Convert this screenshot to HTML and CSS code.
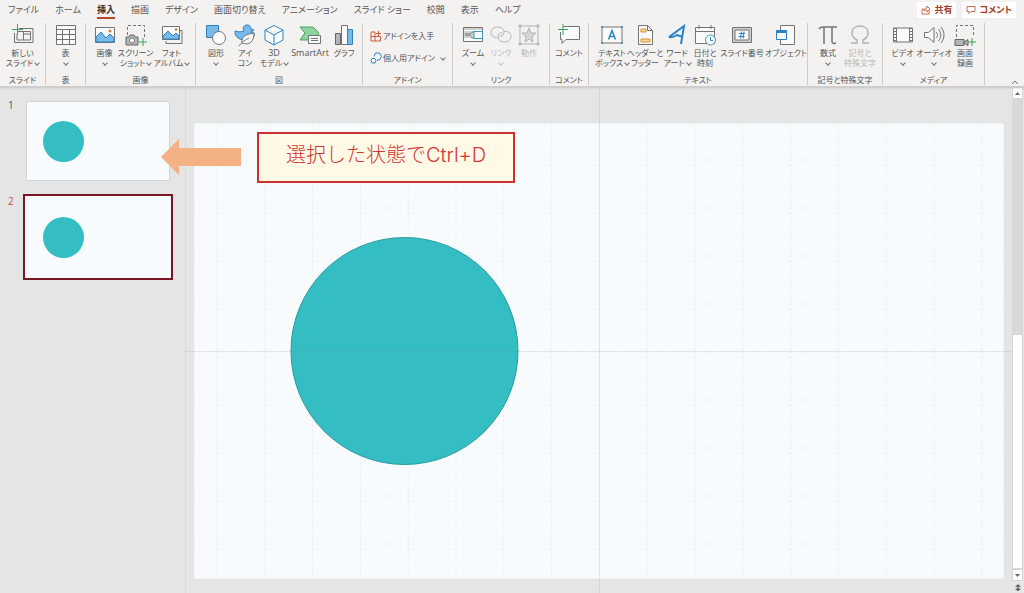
FILE: index.html
```html
<!DOCTYPE html>
<html lang="ja">
<head>
<meta charset="utf-8">
<meta name="viewport" content="width=device-width, initial-scale=1">
<title>プレゼンテーション</title>
<link rel="stylesheet" href="styles.css">
</head>
<body>
<div class="app">
<header class="topbar">
  <nav class="tabs">
    <a class="tab" href="#">ファイル</a>
    <a class="tab" href="#">ホーム</a>
    <a class="tab tab-active" href="#">挿入</a>
    <a class="tab" href="#">描画</a>
    <a class="tab" href="#">デザイン</a>
    <a class="tab" href="#">画面切り替え</a>
    <a class="tab" href="#">アニメーション</a>
    <a class="tab" href="#">スライド ショー</a>
    <a class="tab" href="#">校閲</a>
    <a class="tab" href="#">表示</a>
    <a class="tab" href="#">ヘルプ</a>
  </nav>
  <div class="actions">
    <button class="action"><svg width="10" height="10" viewBox="0 0 10 10"><path d="M3 4H1v5h7V6M3 6c0-2 1-3 3-3V1l3 3-3 3V5C5 5 4 5 3 6z"/></svg>共有</button>
    <button class="action"><svg width="10" height="10" viewBox="0 0 10 10"><path d="M1 1.500h8v5H5l-2 2v-2H1z"/></svg>コメント</button>
  </div>
</header>

<section class="ribbon">
  <div class="group g-slide">
    <div class="tools">
      <button class="tool"><svg class="icon" viewBox="0 0 22 22"><path class="k" d="M7 4.500h14v14H2.500V9M6 7.500h12.500v8.500H5V10M11.500 7.500v8.500M11.500 10H18"/><path class="gr" d="M5.500 0v11M0 5.500h11"/></svg><span>新しい</span><span class="drop">スライド</span></button>
    </div>
    <div class="caption">スライド</div>
  </div>
  <div class="group g-table">
    <div class="tools">
      <button class="tool"><svg class="icon" viewBox="0 0 22 22"><path class="k w" d="M1.500 1.500h19v19h-19z"/><path class="k" d="M1.500 5.500h19M1.500 10.500h19M1.500 15.500h19M7.500 5v15M14.500 5v15"/></svg><span>表</span><span class="drop"></span></button>
    </div>
    <div class="caption">表</div>
  </div>
  <div class="group g-image">
    <div class="tools">
      <button class="tool"><svg class="icon" viewBox="0 0 22 22"><path class="k w" d="M1.500 3.500h19v15h-19z"/><path class="bf" d="M2 13l5-5 5 6 4-4 4 4v4H2z"/><circle class="of" cx="16" cy="7" r="1.500"/></svg><span>画像</span><span class="drop"></span></button>
      <button class="tool"><svg class="icon" viewBox="0 0 22 22"><path class="k dash" d="M2.500 11V1.500h17V13"/><path class="kf" d="M1 13h3l1-2h4l1 2h3v8H1z"/><circle class="k w" cx="7" cy="16.500" r="2.500"/><path class="gr" d="M18 14v8M14 18h8"/></svg><span>スクリーン</span><span class="drop">ショット</span></button>
      <button class="tool"><svg class="icon" viewBox="0 0 22 22"><path class="k" d="M18 6.500h3v13H5V17"/><path class="k w" d="M1.500 2.500h17v13h-17z"/><path class="bf" d="M2 12l5-5 5 5 3-3 3 3v3H2z"/><circle class="of" cx="15" cy="5.500" r="1.300"/></svg><span>フォト</span><span class="drop">アルバム</span></button>
    </div>
    <div class="caption">画像</div>
  </div>
  <div class="group g-figure">
    <div class="tools">
      <button class="tool"><svg class="icon" viewBox="0 0 22 22"><path class="bf" d="M1.500 1.500h12v12h-12z"/><circle class="k w" cx="14" cy="14" r="6.500"/></svg><span>図形</span><span class="drop"></span></button>
      <button class="tool"><svg class="icon" viewBox="0 0 22 22"><path class="bf" d="M1 7c3 1 6 1 9 0-2-3 0-6 3-6s4 2 4 4l3 1-3 2c3 0 4 2 3 4-2 5-12 6-17 1-2-2-2-4-2-6z"/><path class="k w" d="M8 19c-1-7 5-9 12-10 0 8-4 13-12 10zM5 22c3-4 6-6 10-8"/></svg><span>アイ</span><span>コン</span></button>
      <button class="tool"><svg class="icon" viewBox="0 0 22 22"><path class="b w" d="M11 1.500l9 4.500v10l-9 5-9-5V6zM2 6l9 5 9-5M11 11v10"/></svg><span class="latin">3D</span><span class="drop">モデル</span></button>
      <button class="tool"><svg class="icon" viewBox="0 0 22 22"><path class="gf" d="M1 3h13l6 6-5 7H1l5-7z"/><path class="k w" d="M9.500 11.500h12v8h-12z"/><path class="k" d="M12 14.500h7M12 16.500h7"/></svg><span class="latin">SmartArt</span></button>
      <button class="tool"><svg class="icon" viewBox="0 0 22 22"><path class="kf" d="M2.500 9.500h5v11h-5z"/><path class="k w" d="M8.500 1.500h6v19h-6z"/><path class="bf" d="M14.500 5.500h5v15h-5z"/></svg><span>グラフ</span></button>
    </div>
    <div class="caption">図</div>
  </div>
  <div class="group g-addin">
    <div class="addins">
      <button class="addin"><svg width="12" height="12" viewBox="0 0 12 12"><path class="o" d="M1 2h4v9H1zM1 6.500h9.500V11H5M8.500 1v5M6 3.500h5"/></svg>アドインを入手</button>
      <button class="addin"><svg width="12" height="12" viewBox="0 0 12 12"><path class="b" d="M4 4.500L5.500 1h4l2 3.500-2 3.500H7M2 6.500h3L6 8.500 5 11H2L1 8.500z"/></svg><span class="drop">個人用アドイン</span></button>
    </div>
    <div class="caption">アドイン</div>
  </div>
  <div class="group g-link">
    <div class="tools">
      <button class="tool"><svg class="icon" viewBox="0 0 22 22"><path class="k w" d="M1.500 3.500h19v14h-19z"/><path class="lf" d="M2 7h10v7H2zM2 4h18v2H2z"/><path class="k" d="M4 9v3M6 9v3M8 9v3"/><path class="t w" d="M12 7.500h8.500v7H12zM9 9l3-1.500M9 13l3 1.500"/></svg><span>ズーム</span><span class="drop"></span></button>
      <button class="tool" disabled><svg class="icon" viewBox="0 0 22 22"><path class="d" d="M8 13.500C4 14 1 12 1 8.500S4 3 7.500 3 14 5 14 8s-2 4-4 4.500M14 7.500c4-.5 7 1.500 7 5s-3 5.500-6.500 5.500S8 16 8 13s2-4 4-4.500"/></svg><span>リンク</span><span class="drop"></span></button>
      <button class="tool" disabled><svg class="icon" viewBox="0 0 22 22"><path class="d" d="M2 2h18v18H2z"/><path class="d df" d="M11 4l2 5h5l-4 4 1 5-4-3-4 3 1-5-4-4h5z"/><path class="d" d="M1 1h2v2H1zM19 1h2v2h-2zM1 19h2v2H1zM19 19h2v2h-2z"/></svg><span>動作</span></button>
    </div>
    <div class="caption">リンク</div>
  </div>
  <div class="group g-comment">
    <div class="tools">
      <button class="tool"><svg class="icon" viewBox="0 0 22 22"><path class="k w" d="M5 2.500h16.500v13H8l-4 4v-4H2.500V8"/><path class="gr" d="M5 0v11M0 5.500h10"/></svg><span>コメント</span></button>
    </div>
    <div class="caption">コメント</div>
  </div>
  <div class="group g-text">
    <div class="tools">
      <button class="tool"><svg class="icon" viewBox="0 0 22 22"><path class="k w" d="M1 3h20v16H1z"/><path class="b thick" d="M7.500 15.500L11 6.500l3.500 9M8.800 12.500h4.400"/><path class="b thick" d="M0 3h2M20 3h2M0 19h2M20 19h2"/></svg><span>テキスト</span><span class="drop">ボックス</span></button>
      <button class="tool"><svg class="icon" viewBox="0 0 22 22"><path class="k w" d="M4.500 1.500h9l5 5v14h-14zM13.500 1.500v5h5"/><path class="o y" d="M7 5h5v3H7zM7 15h9v3H7z"/></svg><span>ヘッダーと</span><span>フッター</span></button>
      <button class="tool"><svg class="icon" viewBox="0 0 22 22"><path class="b heavy" d="M3 13L18 2l-3 18M3 13c3 1 5 0 8-2l6 2"/></svg><span>ワード</span><span class="drop">アート</span></button>
      <button class="tool"><svg class="icon" viewBox="0 0 22 22"><path class="k w" d="M1.500 3.500h19v16h-19zM1.500 7.500h19M5 1v4M17 1v4"/><circle class="t w" cx="16.500" cy="16" r="5"/><path class="b" d="M16.500 13v3.500H19"/></svg><span>日付と</span><span>時刻</span></button>
      <button class="tool"><svg class="icon" viewBox="0 0 22 22"><path class="k lf" d="M1.500 3.500h19v15h-19z"/><path class="k w" d="M4 6h14v10H4z"/><path class="b" d="M10.500 7.500l-1 7M13 7.500l-1 7M8 9.500h6M7.500 12.500h6"/></svg><span>スライド番号</span></button>
      <button class="tool"><svg class="icon" viewBox="0 0 22 22"><path class="k w" d="M5.500 1.500h14v19h-14z"/><path class="b w" d="M1.500 6.500h10v9h-10z"/><path class="b heavy" d="M1.500 8h10"/></svg><span>オブジェクト</span></button>
    </div>
    <div class="caption">テキスト</div>
  </div>
  <div class="group g-symbol">
    <div class="tools">
      <button class="tool"><svg class="icon" viewBox="0 0 22 22"><path class="k thick" d="M2 5c1-2 2-2 4-2h14M7 3v17M15 3v14c0 2 1 3 4 2"/></svg><span>数式</span><span class="drop"></span></button>
      <button class="tool" disabled><svg class="icon" viewBox="0 0 22 22"><path class="d thick" d="M2 19h6v-3c-4-2-5-5-5-7 0-4 3-7 8-7s8 3 8 7c0 3-1 5-5 7v3h6"/></svg><span>記号と</span><span>特殊文字</span></button>
    </div>
    <div class="caption">記号と特殊文字</div>
  </div>
  <div class="group g-media">
    <div class="tools">
      <button class="tool"><svg class="icon" viewBox="0 0 22 22"><path class="k w" d="M1.500 4h19v14h-19zM4.500 4v14M17.500 4v14"/><path class="k film" d="M3 4v14M19 4v14"/></svg><span>ビデオ</span><span class="drop"></span></button>
      <button class="tool"><svg class="icon" viewBox="0 0 22 22"><path class="k w" d="M1.500 8.500h4L11 3.500v15l-5.500-5h-4z"/><path class="k" d="M13 8c2 2 2 4 0 6M15.500 5c3 4 3 8 0 12M18 3c4 5 4 11 0 16"/></svg><span>オーディオ</span><span class="drop"></span></button>
      <button class="tool"><svg class="icon" viewBox="0 0 22 22"><path class="k dash" d="M2.500 13V1.500h17V13"/><path class="kf" d="M1 15.500h9v6H1zM10 18l4-2.500v6L10 19z"/><path class="gr" d="M18 14v8M14 18h8"/></svg><span>画面</span><span>録画</span></button>
    </div>
    <div class="caption">メディア</div>
  </div>
  <button class="collapse" aria-label="リボンを折りたたむ"><svg width="8" height="6" viewBox="0 0 8 6"><path class="k" d="M1 5l3-3 3 3"/></svg></button>
</section>

<main class="workspace">
  <aside class="slides">
    <div class="slide-row">
      <span class="number">1</span>
      <button class="thumb" aria-label="スライド 1"><span class="dot"></span></button>
    </div>
    <div class="slide-row slide-current">
      <span class="number">2</span>
      <button class="thumb" aria-label="スライド 2"><span class="dot"></span></button>
    </div>
  </aside>
  <section class="stage">
    <svg class="canvas" viewBox="0 0 810 456">
      <defs>
        <pattern id="grid" x="22.500" y="36.500" width="47.800" height="48" patternUnits="userSpaceOnUse">
          <path class="gridline" d="M0 .5h47.800M.5 0v48"/>
        </pattern>
      </defs>
      <rect class="paper" width="810" height="456"/>
      <rect width="810" height="456" fill="url(#grid)"/>
      <circle class="disc" cx="210.500" cy="228" r="113.500"/>
      <path class="guide" d="M-9 228.500H818M405.500 -36V470"/>
    </svg>
    <div class="callout">選択した状態でCtrl+D</div>
    <svg class="arrow" width="80" height="37" viewBox="0 0 80 37"><path d="M0 18L18 0v9h62v18H18v9z"/></svg>
  </section>
  <div class="scrollbar">
    <button class="step" aria-label="上へ"><svg width="5" height="3" viewBox="0 0 5 3"><path d="M0 3L2.500 0 5 3z"/></svg></button>
    <div class="track"><div class="knob"></div></div>
    <button class="step" aria-label="下へ"><svg width="5" height="3" viewBox="0 0 5 3"><path d="M0 0h5L2.500 3z"/></svg></button>
    <button class="step step-plain" aria-label="前のスライド"><svg width="6" height="7" viewBox="0 0 6 7"><path d="M0 3l3-3 3 3zM0 6l3-3 3 3zM2 5h2v2H2z"/></svg></button>
  </div>
</main>
</div>
</body>
</html>
```
FILE: styles.css
```css
* { box-sizing: border-box; }

body {
  margin: 0;
  background: #e5e5e5;
  color: #555;
  font: 8px/10px "Open Sans", "Noto Sans CJK JP", sans-serif;
  font-feature-settings: "palt";
}

button {
  padding: 0;
  border: 0;
  background: none;
  color: inherit;
  font: inherit;
  font-feature-settings: inherit;
}

.app {
  display: flex;
  flex-direction: column;
  height: 100vh;
}

.topbar {
  display: flex;
  justify-content: space-between;
  height: 20px;
  background: #f3f2f1;
}

.tabs {
  display: flex;
  gap: 16px;
  padding-left: 8px;
  font-size: 9px;
  line-height: 14px;
}

.tab {
  height: 19px;
  padding-top: 3px;
  color: inherit;
  text-decoration: none;
  white-space: nowrap;
}

.tab-active {
  border-bottom: 2px solid #b7472a;
  color: #333;
  font-weight: 700;
}

.actions {
  display: flex;
  gap: 6px;
  padding: 2px 8px 2px 0;
}

.action {
  display: flex;
  align-items: center;
  gap: 3px;
  padding: 0 4px;
  border-radius: 1px;
  background: #fff;
  color: #a33c25;
  font-size: 9px;
  font-weight: 700;
}

.action svg {
  fill: none;
  stroke: #b7472a;
  stroke-width: 0.8;
}

.ribbon {
  display: flex;
  flex: none;
  height: 67px;
  padding-top: 3px;
  border-bottom: 1px solid #d0cecc;
  background: #f3f2f1;
  box-shadow: 0 1px 2px #c4c4c4;
  z-index: 1;
}

.group {
  display: flex;
  flex: none;
  flex-direction: column;
  justify-content: space-between;
  height: 62px;
  border-right: 1px solid #cfcdcb;
}

.tools {
  display: grid;
  justify-content: center;
}

.g-slide { width: 46px; }
.g-slide .tools, .g-table .tools, .g-comment .tools { grid-template-columns: 36px; }
.g-table { width: 40px; }
.g-image { width: 110px; }
.g-image .tools { grid-template-columns: 28px 34px 38px; }
.g-figure { width: 167px; }
.g-figure .tools { grid-template-columns: 30px 28px 30px 42px 26px; }
.g-addin { width: 90px; }
.g-link { width: 97px; }
.g-link .tools { grid-template-columns: 30px 26px 30px; }
.g-comment { width: 39px; }
.g-text { width: 219px; }
.g-text .tools {
  grid-template-columns: 30px 36px 28px 28px 46px 42px;
  justify-content: end;
}
.g-symbol { width: 75px; }
.g-symbol .tools { grid-template-columns: 30px 34px; }
.g-media { width: 102px; }
.g-media .tools { grid-template-columns: 29px 34px 28px; }

.tool {
  display: flex;
  flex-direction: column;
  align-items: center;
  white-space: nowrap;
}

.tool:disabled { color: #b8b8b8; }

.latin { font-size: 9px; }

.icon {
  width: 22px;
  height: 22px;
  margin: 1px 0 2px;
}

.drop {
  display: flex;
  align-items: center;
  gap: 2px;
  min-height: 10px;
}

.drop::after {
  content: "";
  width: 3px;
  height: 3px;
  border: solid currentColor;
  border-width: 0 1px 1px 0;
  opacity: 0.8;
  transform: rotate(45deg);
}

.caption {
  text-align: center;
  white-space: nowrap;
}

.addins {
  display: flex;
  flex-direction: column;
  gap: 10px;
  padding: 7px 0 0 7px;
}

.addin {
  display: flex;
  align-items: center;
  gap: 1px;
  height: 12px;
  white-space: nowrap;
}

.addin .drop { gap: 6px; }

.collapse {
  display: flex;
  align-items: flex-end;
  margin-left: auto;
  padding: 0 5px 1px;
}

svg .k, svg .b, svg .t, svg .gr, svg .o, svg .d { fill: none; stroke: #737373; }
svg .b { stroke: #2b83c6; }
svg .t { stroke: #3d9ab5; }
svg .gr { stroke: #36a65a; }
svg .o { stroke: #cf5b38; }
svg .y { fill: #f8d59a; stroke: #d9932f; }
svg .d { stroke: #b3b3b3; }
svg .df { fill: #d5d5d5; }
svg .w { fill: #fafafa; }
svg .bf { fill: #78b9eb; stroke: #3280bb; }
svg .gf { fill: #8fd3a0; stroke: #45a564; }
svg .kf { fill: #b5b5b5; stroke: #666; }
svg .lf { fill: #d0d0d0; }
svg .of { fill: #dc7a3c; }
svg .dash { stroke-dasharray: 3 2; }
svg .film { stroke-width: 2; stroke-dasharray: 1 2; }
svg .thick { stroke-width: 1.5; }
svg .heavy { stroke-width: 2; }

.workspace {
  display: flex;
  flex: 1;
  min-height: 0;
}

.slides {
  display: flex;
  flex: none;
  flex-direction: column;
  gap: 10px;
  width: 186px;
  padding: 11px 12px 0 8px;
  border-right: 1px solid #d8d8d8;
}

.slide-row {
  display: grid;
  grid-template-columns: 15px 1fr;
}

.number {
  padding-top: 1px;
  font-size: 10px;
  line-height: 12px;
}

.thumb {
  display: flex;
  align-items: center;
  aspect-ratio: 150 / 86;
  padding-left: 18px;
  border: 2px solid transparent;
  background: #f7fbfd;
  background-clip: padding-box;
  box-shadow: inset 0 0 0 1px #e5e5e5, inset 0 0 0 2px #d3d6d6;
}

.slide-current .number { color: #c8503a; }

.slide-current .thumb {
  border-color: #7a1526;
  box-shadow: none;
}

.dot {
  width: 41px;
  height: 41px;
  border-radius: 50%;
  background: #34bec3;
}

.stage {
  position: relative;
  flex: 1;
  min-width: 0;
  padding: 36px 8px 0;
}

.canvas {
  display: block;
  width: 100%;
  overflow: visible;
}

.paper { fill: #f7fbfd; stroke: #d9dddd; stroke-width: 0.5; }
.gridline { fill: none; stroke: #e6eaeb; stroke-dasharray: 2 3; }
.guide { fill: none; stroke: #777; stroke-opacity: 0.14; }
.disc { fill: #34bec3; stroke: #279ba0; }

.callout {
  position: absolute;
  top: 45px;
  left: 71px;
  padding: 6px 27px 10px;
  border: 2px solid #cc3030;
  background: #fff9e6;
  color: #d13434;
  font: 300 20px/31px Inter, "Noto Sans CJK JP", sans-serif;
  white-space: nowrap;
}

.arrow {
  position: absolute;
  top: 52px;
  left: -25px;
  fill: #f4b183;
}

.scrollbar {
  display: flex;
  flex: none;
  flex-direction: column;
  width: 12px;
  padding-right: 1px;
}

.step {
  display: flex;
  align-items: center;
  justify-content: center;
  height: 12px;
  border: 1px solid #d5d5d5;
  background: #fff;
  fill: #666;
}

.step-plain {
  border-color: transparent;
  background: none;
}

.track {
  display: flex;
  flex: 1;
  align-items: flex-end;
  background: #d8d8d8;
}

.knob {
  width: 100%;
  height: 50%;
  border: 1px solid #d5d5d5;
  background: #fff;
}
```
